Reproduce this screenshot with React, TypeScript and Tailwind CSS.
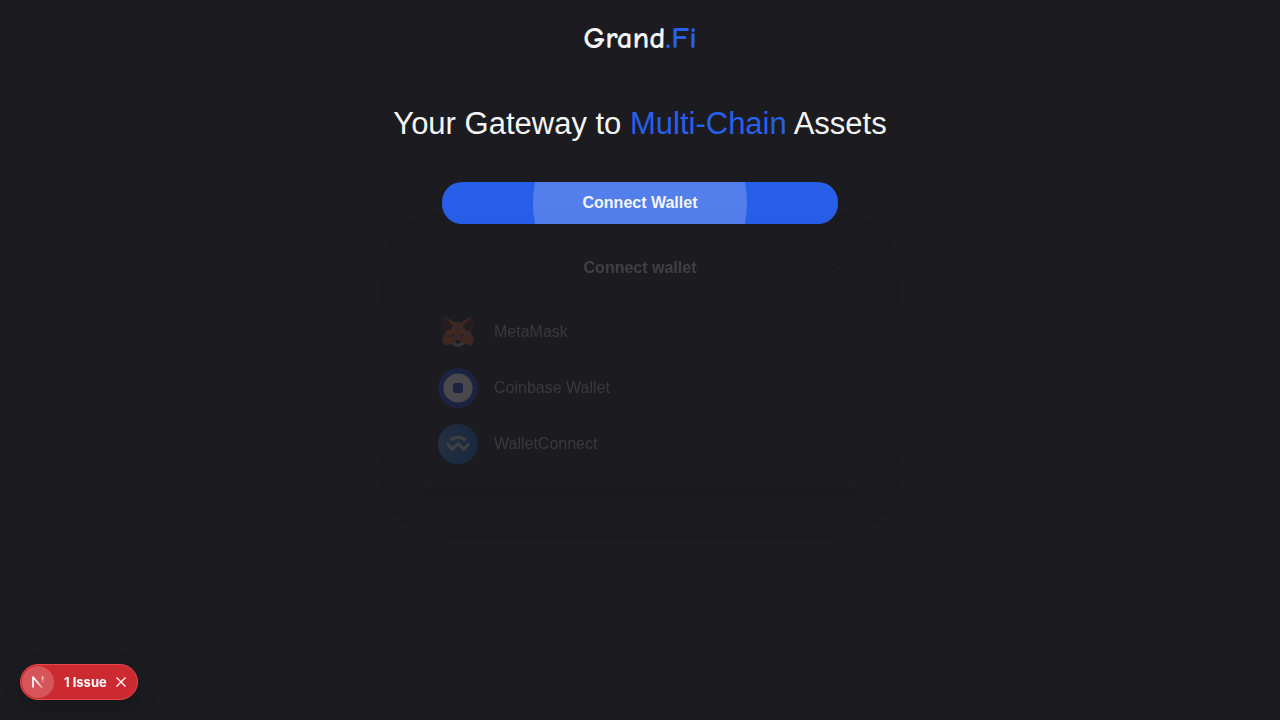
import type { ReactNode } from "react";

function MetaMaskIcon() {
  return (
    <svg viewBox="0 0 318.6 318.6" className="size-10" aria-hidden="true">
      <g fill="#D05A24">
        <polygon points="50,35.5 135,82 183,82 268,35.5 286,90 240,210 78,210 32,90" />
        <polygon points="33.9,207.7 50.1,268 106.8,250 140.6,232 111.4,205 80,200" />
        <polygon points="284.8,207.7 268.5,268 211.8,250 177.9,232 207.1,205 238,200" />
      </g>
      <g fill="#A85C44">
        <polygon points="62,158 33.9,207.7 111.4,208 90,172" />
        <polygon points="256,158 284.8,207.7 207.1,208 228,172" />
        <polygon points="90,180 140,190 145,234 135,236 111.4,208" />
        <polygon points="228,180 178,190 173,234 183,236 207.1,208" />
        <polygon points="135,82 183,82 178,140 172,232 146,232 140,140" />
      </g>
      <g fill="#55271F">
        <polygon points="138.8,196 104,188 128,178" />
        <polygon points="179.7,196 190,178 214,188" />
      </g>
      <polygon
        fill="#A89C98"
        points="100,250 140.6,236 177.9,236 218,250 200.8,262 178.4,274 140.1,274 117.8,262"
      />
      <polygon fill="#161616" points="177.9,234 173,229 145.4,229 140.6,234 142,248 146,251 172,251 176.6,248" />
      <g fill="#4A2520">
        <polygon points="46,40 60,48 122,112 104,140 70,154 40,146 34,96" />
        <polygon points="272,40 258,48 196,112 214,140 248,154 278,146 284,96" />
      </g>
    </svg>
  );
}

function CoinbaseIcon() {
  return (
    <svg viewBox="0 0 40 40" className="size-10" aria-hidden="true">
      <circle cx="20" cy="20" r="20" fill="#1C48C8" />
      <circle cx="20" cy="20" r="14.6" fill="#fff" />
      <rect x="15" y="15" width="10" height="10" rx="2" fill="#1C48C8" />
    </svg>
  );
}

function WalletConnectIcon() {
  return (
    <svg viewBox="0 0 40 40" className="size-10" aria-hidden="true">
      <defs>
        <radialGradient id="wc" cx="0" cy="0.5" r="1">
          <stop offset="0" stopColor="#5288C8" />
          <stop offset="1" stopColor="#0A60B8" />
        </radialGradient>
      </defs>
      <circle cx="20" cy="20" r="20" fill="url(#wc)" />
      <path
        d="M12.6 16.2c4.1-4 10.7-4 14.8 0M8.9 19.6l5.6 5.5 5.5-5.5 5.5 5.5 5.6-5.5"
        fill="none"
        stroke="#d0d0d0"
        strokeWidth="2.9"
        strokeLinejoin="miter"
      />
    </svg>
  );
}

const wallets: { name: string; icon: ReactNode }[] = [
  { name: "MetaMask", icon: <MetaMaskIcon /> },
  { name: "Coinbase Wallet", icon: <CoinbaseIcon /> },
  { name: "WalletConnect", icon: <WalletConnectIcon /> },
];

function WalletDialog() {
  return (
    <div className="fixed inset-0 flex items-center justify-center opacity-20">
      <div
        role="dialog"
        aria-labelledby="wallet-title"
        className="w-full max-w-[460px] rounded-3xl bg-[#1f1e22] px-7 py-6 shadow-[0_11px_15px_-7px_rgba(0,0,0,0.2),0_24px_38px_3px_rgba(0,0,0,0.14),0_9px_46px_8px_rgba(0,0,0,0.12)]"
      >
        <div className="grid grid-cols-[1fr_auto_1fr] items-center">
          <h2 id="wallet-title" className="col-start-2 text-base font-bold text-[#d0d0d0]">
            Connect wallet
          </h2>
          <button type="button" aria-label="Close dialog" className="justify-self-end">
            <svg viewBox="0 0 16 16" className="size-4" fill="none" stroke="#0a0a0a" strokeWidth="1.3">
              <path d="M2 2l12 12M14 2L2 14" />
            </svg>
          </button>
        </div>
        <ul className="mt-8 flex flex-col gap-4">
          {wallets.map((wallet) => (
            <li key={wallet.name}>
              <button type="button" className="flex w-full items-center gap-4 text-left text-base text-[#aaaaaa]">
                {wallet.icon}
                {wallet.name}
              </button>
            </li>
          ))}
        </ul>
      </div>
    </div>
  );
}

function IssueBadge() {
  return (
    <div className="fixed bottom-5 left-5 flex h-9 items-center rounded-full border border-[#e5484d] bg-[#ca2a30] pr-[10px] pl-px text-white shadow-[0_8px_20px_rgba(0,0,0,0.2)]">
      <button
        type="button"
        aria-label="Open developer tools"
        className="flex size-8 items-center justify-center rounded-full bg-[#d6555a]"
      >
        <svg viewBox="0 0 16 16" className="size-4" fill="none" aria-hidden="true">
          <defs>
            <linearGradient id="diagonal" x1="8" y1="8" x2="13" y2="14" gradientUnits="userSpaceOnUse">
              <stop stopColor="#fff" />
              <stop offset="1" stopColor="#fff" stopOpacity="0.2" />
            </linearGradient>
            <linearGradient id="stem" x1="12" y1="2" x2="12" y2="9" gradientUnits="userSpaceOnUse">
              <stop stopColor="#fff" />
              <stop offset="1" stopColor="#fff" stopOpacity="0" />
            </linearGradient>
          </defs>
          <path d="M3 3L12.2 14" stroke="url(#diagonal)" strokeWidth="1.7" />
          <path d="M3 13.5V2.4" stroke="#fff" strokeWidth="1.7" />
          <path d="M12.6 2.5v7" stroke="url(#stem)" strokeWidth="1.7" />
        </svg>
      </button>
      <span className="ml-[10px] font-['Inter',sans-serif] text-[13px] leading-5 font-bold">1 Issue</span>
      <button type="button" aria-label="Hide issues" className="ml-2">
        <svg viewBox="0 0 12 12" className="size-3" fill="none" stroke="#fff" strokeWidth="1.3">
          <path d="M1.5 1.5l9 9M10.5 1.5l-9 9" />
        </svg>
      </button>
    </div>
  );
}

export default function App() {
  return (
    <div className="min-h-screen bg-[#1c1b20] font-['Liberation_Sans',Arial,sans-serif] text-[#f5f5f5]">
      <header className="flex justify-center pt-4">
        <a href="#" className="font-['Comic_Neue','Comic_Sans_MS',cursive] text-[31px] leading-11 font-bold">
          Grand<span className="text-[#2860e8]">.Fi</span>
        </a>
      </header>
      <main className="flex flex-col items-center px-6 pt-11">
        <h1 className="text-center text-[31px] leading-10">
          Your Gateway to <span className="text-[#2860e8]">Multi-Chain</span> Assets
        </h1>
        <button
          type="button"
          className="relative mt-[38px] h-[42px] w-full max-w-[396px] overflow-hidden rounded-[20px] bg-[#275fe8] text-base font-bold"
        >
          <span className="absolute top-1/2 left-1/2 size-[214px] -translate-x-1/2 -translate-y-1/2 rounded-full bg-white/20" />
          <span className="relative">Connect Wallet</span>
        </button>
      </main>
      <WalletDialog />
      <IssueBadge />
    </div>
  );
}
